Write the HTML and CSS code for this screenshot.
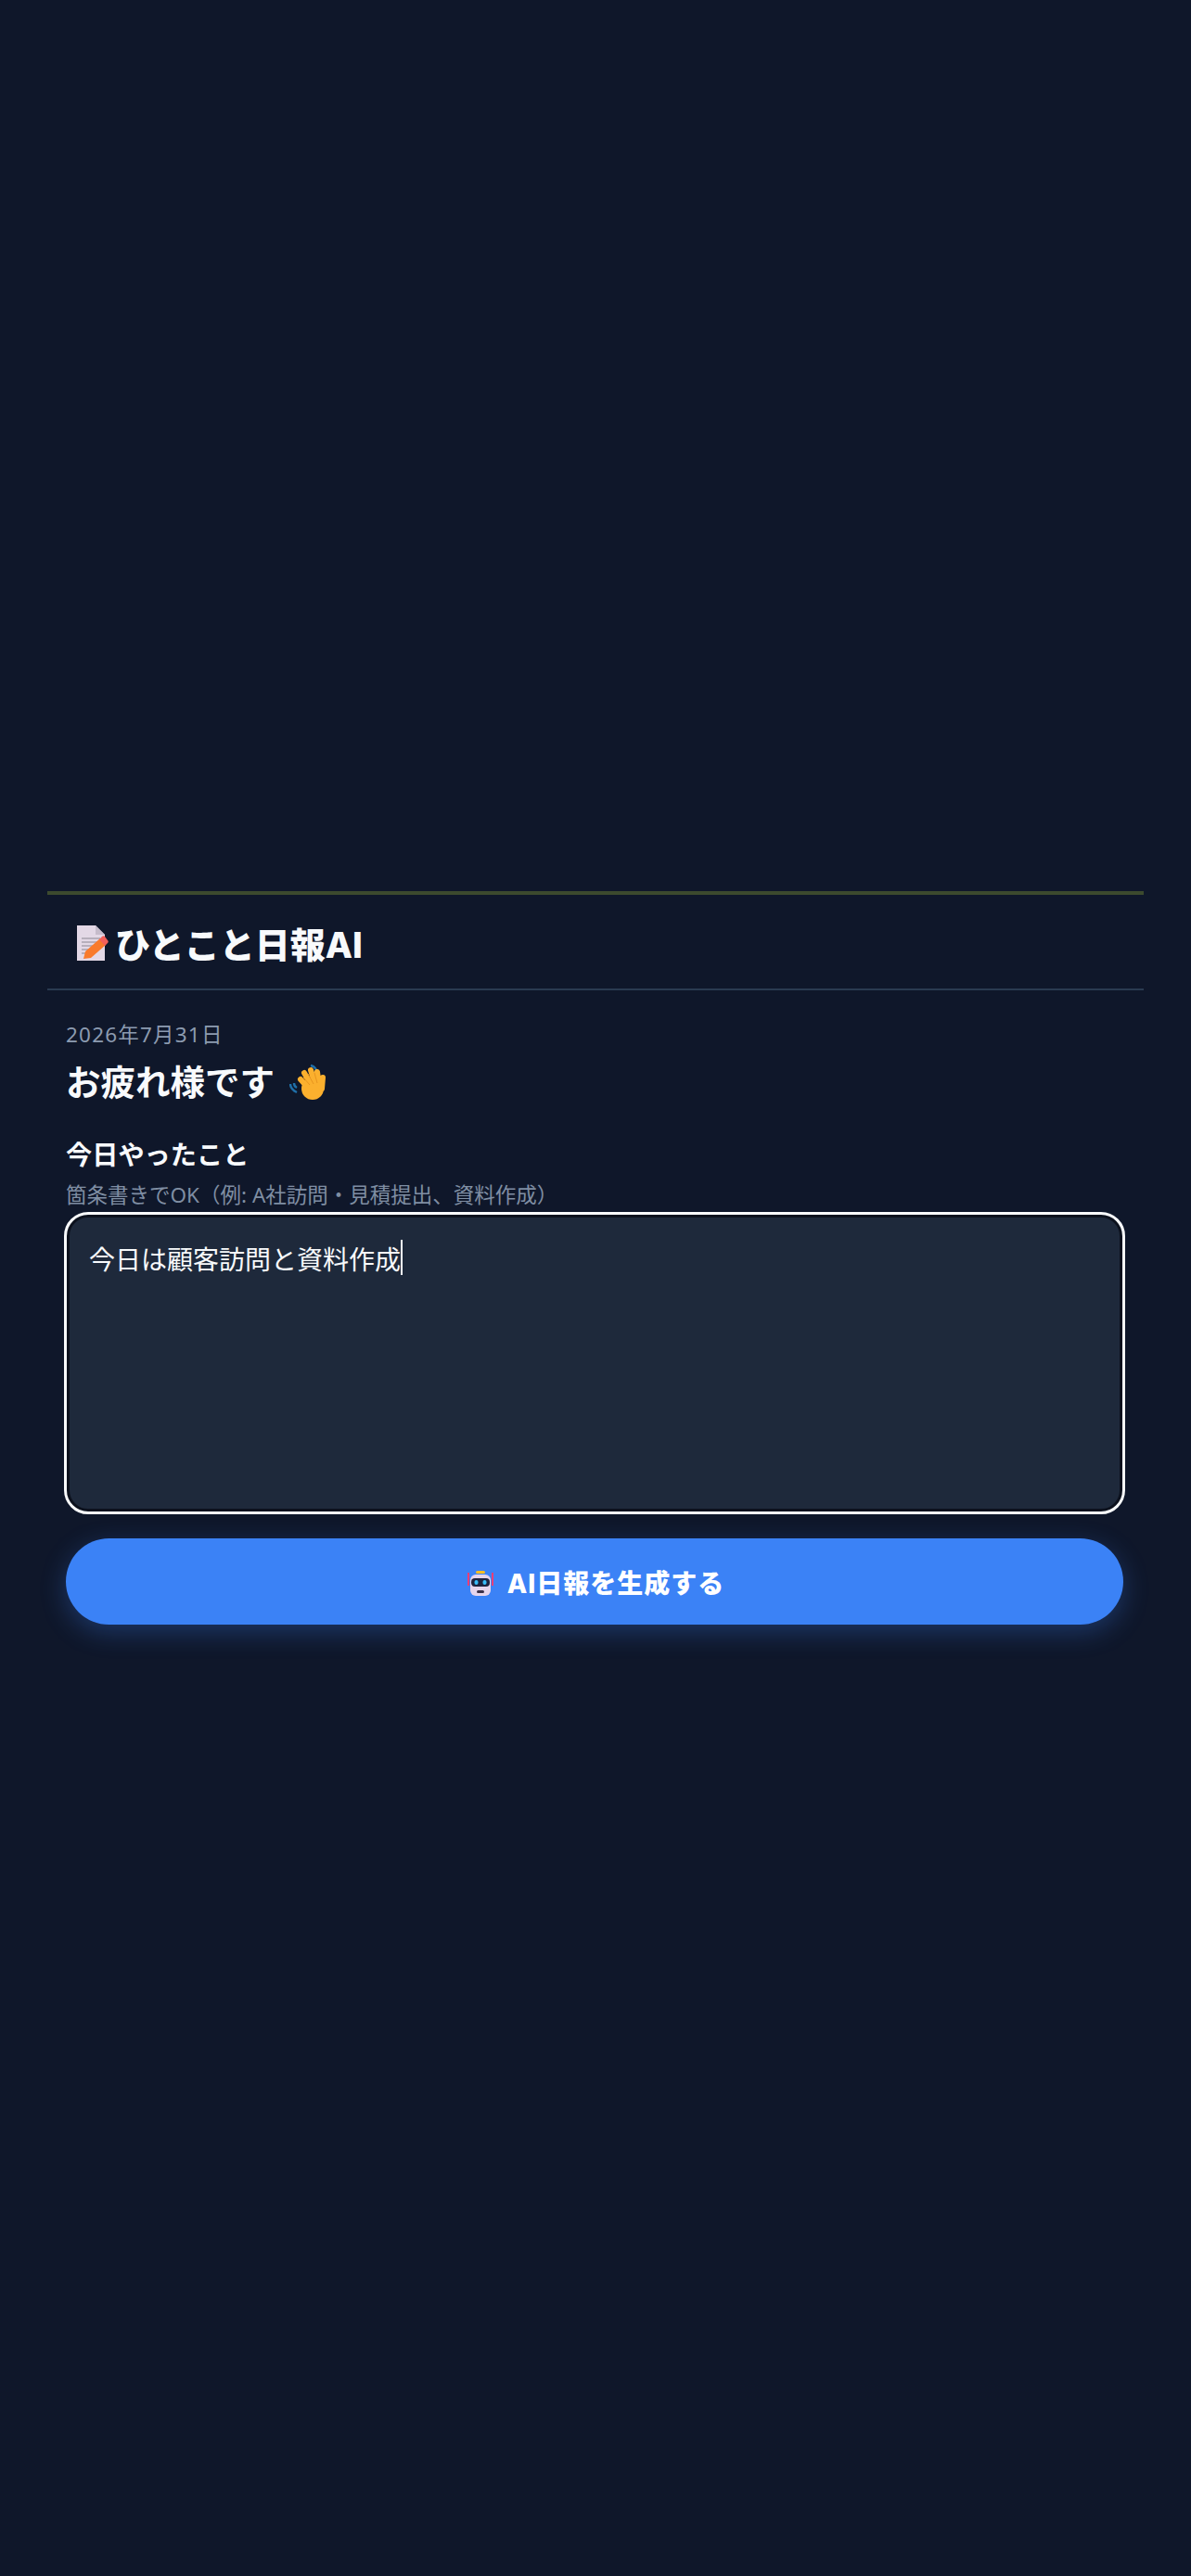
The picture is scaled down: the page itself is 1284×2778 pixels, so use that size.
FILE: index.html
```html
<!DOCTYPE html>
<html lang="ja">

<head>
    <title>ひとこと日報AI</title>
    <meta name="viewport" content="width=device-width, initial-scale=1">
    <link rel="stylesheet" href="styles.css">
</head>

<body>
    <div class="app">
        <div class="topbar">
            <svg class="icon-memo" viewBox="0 0 36 40" aria-hidden="true">
                <path d="M3 1h20l10 10v28H3z" fill="#e3d8e6" />
                <path d="M23 1v10h10z" fill="#c6bccb" />
                <path d="M8 15h20M8 19h20M8 23h18M8 27h12M8 31h6" stroke="#a9a1ae" stroke-width="1.6" />
                <path d="M10 37l2-8 16-14 6 7-16 14z" fill="#f97a2c" />
                <path d="M27 16l3-3c1-1 2-1 3 0l3 4c1 1 1 2 0 3l-3 3z" fill="#f4605a" />
            </svg>
            <h1>ひとこと日報AI</h1>
        </div>

        <div class="content">
            <p class="date">2026年7月31日</p>
            <h2>お疲れ様です
                <svg class="icon-wave" viewBox="0 0 40 40" aria-hidden="true">
                    <path d="M23 2c4 1 7 5 8 10M22 7c2 1 4 2 5 5M1 22c0 4 3 7 7 9M5 21c0 2 1 4 3 5" fill="none" stroke="#1f6fa8" stroke-width="2.4" />
                    <circle cx="25" cy="27" r="12" fill="#fbb02e" />
                    <path d="M12 17l9 10M16 10l8 14M23 7l5 16M30 9l2 15M36 15l-1 12" fill="none" stroke="#fbb02e" stroke-width="6" stroke-linecap="round" />
                    <path d="M15 15l7 8M20 11l6 11M27 10l3 11" fill="none" stroke="#e8951f" stroke-width="1" />
                </svg>
            </h2>

            <label class="field-label" for="report">今日やったこと</label>
            <p class="hint">箇条書きでOK（例: A社訪問・見積提出、資料作成）</p>
            <div class="textarea">
                <span>今日は顧客訪問と資料作成</span><span class="caret"></span>
            </div>

            <button class="button">
                <svg class="icon-robot" viewBox="0 0 30 30" aria-hidden="true">
                    <rect x="10" y="0" width="10" height="3" rx="1.5" fill="#fbbf24" />
                    <path d="M2 2v14M28 2v14" stroke="#ec3f78" stroke-width="2" />
                    <rect x="4" y="4" width="22" height="23" rx="6" fill="#e6d5ec" />
                    <rect x="5" y="8" width="20" height="9" rx="4" fill="#1e2440" />
                    <rect x="8.5" y="10" width="4" height="5" rx="2" fill="#38bdf8" />
                    <rect x="17.5" y="10" width="4" height="5" rx="2" fill="#38bdf8" />
                    <rect x="11" y="21" width="8" height="3" rx="1.5" fill="#3a3048" />
                </svg>
                <span>AI日報を生成する</span>
            </button>
        </div>
    </div>
</body>

</html>
```

FILE: styles.css
```css
html, body {
    margin: 0;
    background-color: #0f172a;
}

body {
    height: 2778px;
    overflow: hidden;
    font-family: "Noto Sans", "Noto Sans CJK JP", sans-serif;
    color: #f8fafc;
}

.app {
    padding: 961px 51px 0 51px;
}

.topbar {
    display: flex;
    align-items: center;
    gap: 8px;
    box-sizing: border-box;
    height: 107px;
    padding: 3px 0 0 29px;
    border-top: 4px solid #3c4a2e;
    border-bottom: 2px solid #2a3a50;
}

.topbar h1 {
    margin: 3px 0 0 0;
    font-family: Inter, "Noto Sans CJK JP", sans-serif;
    font-size: 38px;
    font-weight: 800;
    line-height: 1;
}

.icon-memo {
    width: 36px;
    height: 40px;
    overflow: visible;
}

.content {
    padding: 30px 22px 0 20px;
}

.date {
    margin: 0;
    font-size: 22.5px;
    line-height: 36px;
    letter-spacing: 1.2px;
    color: #8c9bb0;
}

h2 {
    display: flex;
    align-items: center;
    gap: 16px;
    margin: 7px 0 0 0;
    font-size: 37.5px;
    font-weight: 700;
    line-height: 52px;
}

.icon-wave {
    width: 40px;
    height: 40px;
}

.field-label {
    display: block;
    margin-top: 30px;
    font-size: 28.2px;
    font-weight: 700;
    line-height: 44px;
}

.hint {
    margin: 4px 0 0 0;
    font-size: 22.5px;
    line-height: 36px;
    color: #7f8ea3;
}

.textarea {
    display: flex;
    align-items: flex-start;
    box-sizing: border-box;
    height: 322px;
    margin-top: 2px;
    padding: 24px 21px;
    background-color: #1e293b;
    border: 4px solid #0c111d;
    border-radius: 24px;
    outline: 3px solid #f8fafc;
    outline-offset: -1px;
    font-size: 28px;
    line-height: 42px;
    color: #f8fafc;
}

.caret {
    width: 2px;
    height: 38px;
    background-color: #f8fafc;
}

.button {
    display: flex;
    align-items: center;
    justify-content: center;
    gap: 14px;
    width: 100%;
    height: 93px;
    margin-top: 28px;
    background-color: #3b82f6;
    border: none;
    border-radius: 47px;
    box-shadow: 0 8px 28px rgba(59, 130, 246, .3);
    font-family: Inter, "Noto Sans CJK JP", sans-serif;
    font-size: 28px;
    font-weight: 800;
    letter-spacing: 1px;
    color: #fff;
}

.icon-robot {
    width: 30px;
    height: 30px;
    margin: 7px 0 0 2px;
}
```
